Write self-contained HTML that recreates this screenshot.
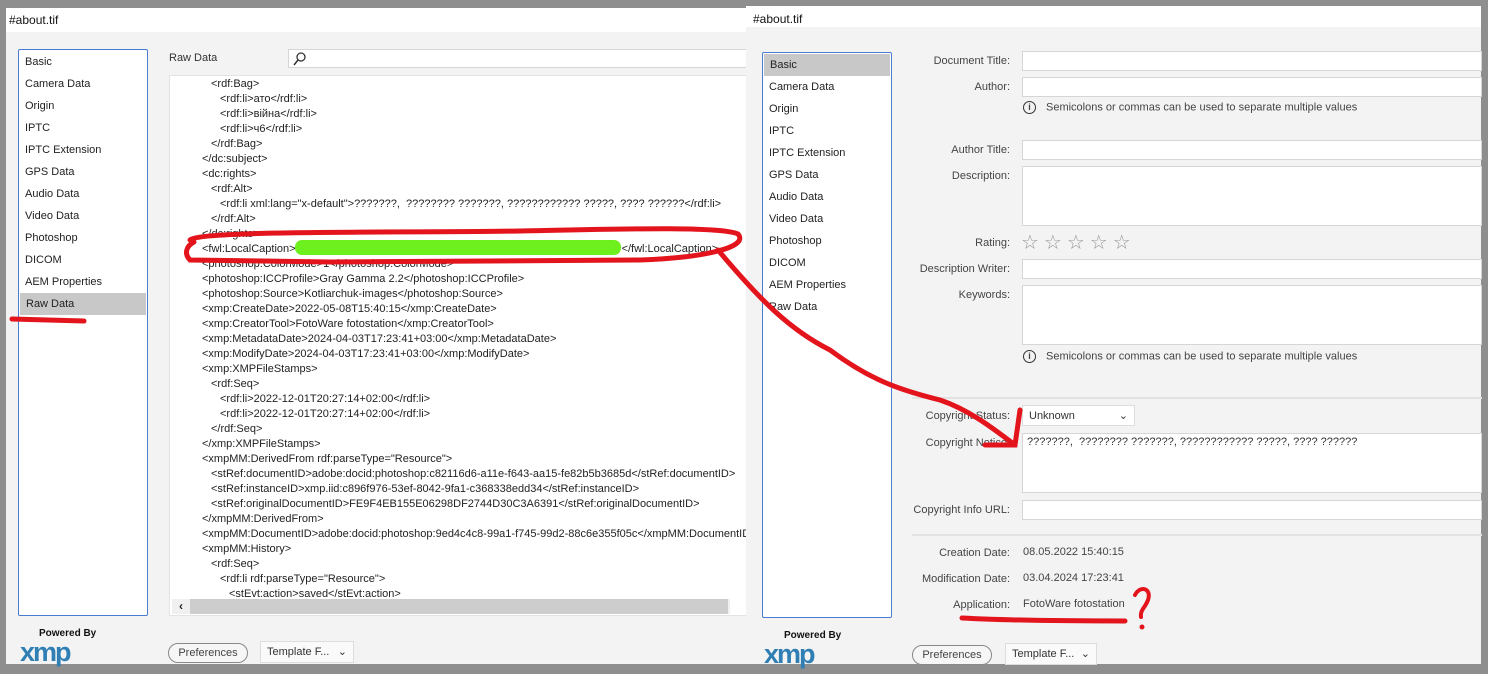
<!DOCTYPE html><html><head><meta charset="utf-8"><style>
*{box-sizing:border-box;margin:0;padding:0}
body{width:1488px;height:674px;background:#8e8e8e;position:relative;overflow:hidden;font-family:"Liberation Sans","DejaVu Sans",sans-serif;font-size:11px;color:#333}
.a{position:absolute}
.win{position:absolute;background:#f3f3f3}
.tb{position:absolute;left:0;right:0;top:0;height:24px;background:#fff;color:#111;font-size:12px;padding:5px 3px}
.side{position:absolute;background:#fff;border:1px solid #4a7bd0;border-radius:2px}
.side div{height:22px;line-height:22px;padding-left:6px;color:#222}
.side .sel{background:#c8c8c8;margin:0 1px}
.ta div{height:15px;line-height:15px;white-space:nowrap;color:#222}
.lbl{position:absolute;right:0;text-align:right;color:#444;width:140px}
.in{position:absolute;background:#fff;border:1px solid #d6d6d6}
.btn{position:absolute;border:1px solid #888;border-radius:10px;height:20px;line-height:18px;text-align:center;color:#444;background:#f6f6f6}
.dd{position:absolute;border:1px solid #ddd;background:#fafafa;height:22px;line-height:20px;padding-left:6px;color:#333}
.xmp{position:absolute;color:#2f7fb5;font-weight:bold;font-size:27px;letter-spacing:-2px;line-height:20px}
.pb{position:absolute;font-size:10px;font-weight:bold;color:#111}
</style></head><body>
<!-- LEFT WINDOW -->
<div class="win" style="left:6px;top:8px;width:740px;height:656px">
<div class="tb">#about.tif</div>
<div class="side" style="left:12px;top:41px;width:130px;height:567px;padding-top:1px">
<div>Basic</div><div>Camera Data</div><div>Origin</div><div>IPTC</div><div>IPTC Extension</div><div>GPS Data</div><div>Audio Data</div><div>Video Data</div><div>Photoshop</div><div>DICOM</div><div>AEM Properties</div><div class="sel">Raw Data</div></div>
<div class="a" style="left:163px;top:44px;color:#333">Raw Data</div>
<div class="in" style="left:282px;top:41px;width:460px;height:19px"><svg class="a" style="left:4px;top:2px" width="14" height="14"><circle cx="8" cy="5" r="4" fill="none" stroke="#333" stroke-width="1.3"/><path d="M5 8 L1 13" stroke="#333" stroke-width="1.5"/></svg></div>
<div class="in ta" style="left:163px;top:67px;width:580px;height:541px;border-color:#e3e3e3;padding-top:1px;overflow:hidden">
<div style="padding-left:41px">&lt;rdf:Bag&gt;</div>
<div style="padding-left:50px">&lt;rdf:li&gt;ато&lt;/rdf:li&gt;</div>
<div style="padding-left:50px">&lt;rdf:li&gt;війна&lt;/rdf:li&gt;</div>
<div style="padding-left:50px">&lt;rdf:li&gt;ч6&lt;/rdf:li&gt;</div>
<div style="padding-left:41px">&lt;/rdf:Bag&gt;</div>
<div style="padding-left:32px">&lt;/dc:subject&gt;</div>
<div style="padding-left:32px">&lt;dc:rights&gt;</div>
<div style="padding-left:41px">&lt;rdf:Alt&gt;</div>
<div style="padding-left:50px">&lt;rdf:li xml:lang="x-default"&gt;???????,&nbsp; ???????? ???????, ???????????? ?????, ???? ??????&lt;/rdf:li&gt;</div>
<div style="padding-left:41px">&lt;/rdf:Alt&gt;</div>
<div style="padding-left:32px">&lt;/dc:rights&gt;</div>
<div style="padding-left:32px">&lt;fwl:LocalCaption&gt;<span style="display:inline-block;width:326px"></span>&lt;/fwl:LocalCaption&gt;</div>
<div style="padding-left:32px">&lt;photoshop:ColorMode&gt;1&lt;/photoshop:ColorMode&gt;</div>
<div style="padding-left:32px">&lt;photoshop:ICCProfile&gt;Gray Gamma 2.2&lt;/photoshop:ICCProfile&gt;</div>
<div style="padding-left:32px">&lt;photoshop:Source&gt;Kotliarchuk-images&lt;/photoshop:Source&gt;</div>
<div style="padding-left:32px">&lt;xmp:CreateDate&gt;2022-05-08T15:40:15&lt;/xmp:CreateDate&gt;</div>
<div style="padding-left:32px">&lt;xmp:CreatorTool&gt;FotoWare fotostation&lt;/xmp:CreatorTool&gt;</div>
<div style="padding-left:32px">&lt;xmp:MetadataDate&gt;2024-04-03T17:23:41+03:00&lt;/xmp:MetadataDate&gt;</div>
<div style="padding-left:32px">&lt;xmp:ModifyDate&gt;2024-04-03T17:23:41+03:00&lt;/xmp:ModifyDate&gt;</div>
<div style="padding-left:32px">&lt;xmp:XMPFileStamps&gt;</div>
<div style="padding-left:41px">&lt;rdf:Seq&gt;</div>
<div style="padding-left:50px">&lt;rdf:li&gt;2022-12-01T20:27:14+02:00&lt;/rdf:li&gt;</div>
<div style="padding-left:50px">&lt;rdf:li&gt;2022-12-01T20:27:14+02:00&lt;/rdf:li&gt;</div>
<div style="padding-left:41px">&lt;/rdf:Seq&gt;</div>
<div style="padding-left:32px">&lt;/xmp:XMPFileStamps&gt;</div>
<div style="padding-left:32px">&lt;xmpMM:DerivedFrom rdf:parseType="Resource"&gt;</div>
<div style="padding-left:41px">&lt;stRef:documentID&gt;adobe:docid:photoshop:c82116d6-a11e-f643-aa15-fe82b5b3685d&lt;/stRef:documentID&gt;</div>
<div style="padding-left:41px">&lt;stRef:instanceID&gt;xmp.iid:c896f976-53ef-8042-9fa1-c368338edd34&lt;/stRef:instanceID&gt;</div>
<div style="padding-left:41px">&lt;stRef:originalDocumentID&gt;FE9F4EB155E06298DF2744D30C3A6391&lt;/stRef:originalDocumentID&gt;</div>
<div style="padding-left:32px">&lt;/xmpMM:DerivedFrom&gt;</div>
<div style="padding-left:32px">&lt;xmpMM:DocumentID&gt;adobe:docid:photoshop:9ed4c4c8-99a1-f745-99d2-88c6e355f05c&lt;/xmpMM:DocumentID&gt;</div>
<div style="padding-left:32px">&lt;xmpMM:History&gt;</div>
<div style="padding-left:41px">&lt;rdf:Seq&gt;</div>
<div style="padding-left:50px">&lt;rdf:li rdf:parseType="Resource"&gt;</div>
<div style="padding-left:59px">&lt;stEvt:action&gt;saved&lt;/stEvt:action&gt;</div>
<div class="a" style="left:2px;top:523px;width:558px;height:15px;background:#f0f0f0"><div class="a" style="left:0;top:0;width:18px;font-size:12px;font-weight:bold;text-align:center">‹</div><div class="a" style="left:18px;top:0;width:538px;height:15px;background:#cdcdcd"></div></div>
</div>
<div class="pb" style="left:33px;top:620px">Powered By</div>
<div class="xmp" style="left:14px;top:634px">xmp</div>
<div class="btn" style="left:162px;top:635px;width:80px">Preferences</div>
<div class="dd" style="left:254px;top:633px;width:94px">Template F... <span style="float:right;margin-right:6px">⌄</span></div>
</div>
<!-- RIGHT WINDOW -->
<div class="win" style="left:746px;top:6px;width:735px;height:658px">
<div class="tb" style="height:21px;padding:6px 7px">#about.tif</div>
<div class="side" style="left:16px;top:46px;width:130px;height:566px;padding-top:1px">
<div class="sel">Basic</div><div>Camera Data</div><div>Origin</div><div>IPTC</div><div>IPTC Extension</div><div>GPS Data</div><div>Audio Data</div><div>Video Data</div><div>Photoshop</div><div>DICOM</div><div>AEM Properties</div><div>Raw Data</div></div>
<div class="a" style="left:124px;top:0;width:140px;height:600px">
<div class="lbl" style="top:49px">Document Title:</div>
<div class="lbl" style="top:75px">Author:</div>
<div class="lbl" style="top:138px">Author Title:</div>
<div class="lbl" style="top:164px">Description:</div>
<div class="lbl" style="top:231px">Rating:</div>
<div class="lbl" style="top:257px">Description Writer:</div>
<div class="lbl" style="top:283px">Keywords:</div>
<div class="lbl" style="top:404px">Copyright Status:</div>
<div class="lbl" style="top:431px">Copyright Notice:</div>
<div class="lbl" style="top:498px">Copyright Info URL:</div>
<div class="lbl" style="top:541px">Creation Date:</div>
<div class="lbl" style="top:567px">Modification Date:</div>
<div class="lbl" style="top:593px">Application:</div>
</div>
<div class="in" style="left:276px;top:45px;width:460px;height:20px"></div>
<div class="in" style="left:276px;top:71px;width:460px;height:20px"></div>
<div class="a" style="left:277px;top:95px;color:#444"><span style="display:inline-block;width:13px;height:13px;border:1.3px solid #333;border-radius:50%;text-align:center;font-size:9px;line-height:11px;font-weight:bold;vertical-align:middle;margin-right:10px">i</span>Semicolons or commas can be used to separate multiple values</div>
<div class="in" style="left:276px;top:134px;width:460px;height:20px"></div>
<div class="in" style="left:276px;top:160px;width:460px;height:60px"></div>
<div class="a" style="left:275px;top:224px;font-size:20px;color:#999;letter-spacing:5px">☆☆☆☆☆</div>
<div class="in" style="left:276px;top:253px;width:460px;height:20px"></div>
<div class="in" style="left:276px;top:279px;width:460px;height:60px"></div>
<div class="a" style="left:277px;top:344px;color:#444"><span style="display:inline-block;width:13px;height:13px;border:1.3px solid #333;border-radius:50%;text-align:center;font-size:9px;line-height:11px;font-weight:bold;vertical-align:middle;margin-right:10px">i</span>Semicolons or commas can be used to separate multiple values</div>
<div class="a" style="left:166px;top:391px;width:570px;height:2px;background:#e2e2e2"></div>
<div class="dd" style="left:276px;top:399px;width:113px;height:21px;background:#fff">Unknown<span style="float:right;margin-right:6px">⌄</span></div>
<div class="in" style="left:276px;top:427px;width:460px;height:60px;padding:2px 4px;color:#333">???????,&nbsp; ???????? ???????, ???????????? ?????, ???? ??????</div>
<div class="in" style="left:276px;top:494px;width:460px;height:20px"></div>
<div class="a" style="left:166px;top:528px;width:570px;height:2px;background:#e2e2e2"></div>
<div class="a" style="left:277px;top:540px;color:#444">08.05.2022 15:40:15</div>
<div class="a" style="left:277px;top:566px;color:#444">03.04.2024 17:23:41</div>
<div class="a" style="left:277px;top:592px;color:#444">FotoWare fotostation</div>
<div class="pb" style="left:38px;top:624px">Powered By</div>
<div class="xmp" style="left:18px;top:638px">xmp</div>
<div class="btn" style="left:166px;top:639px;width:80px">Preferences</div>
<div class="dd" style="left:259px;top:637px;width:92px">Template F... <span style="float:right;margin-right:6px">⌄</span></div>
</div>
<!-- annotations -->
<svg class="a" style="left:0;top:0" width="1488" height="674">
<rect x="295" y="240" width="326" height="15" rx="7" fill="#6ef01e"/>
<path d="M190 240 C200 230 400 233 520 231 C620 229 720 226 738 234 C750 248 700 258 640 260 L330 262 L190 260 C184 254 186 246 194 242" fill="none" stroke="#e3141c" stroke-width="5" stroke-linecap="round"/>
<path d="M12 319 L84 321" stroke="#e3141c" stroke-width="5" stroke-linecap="round"/>
<path d="M718 250 C760 300 790 330 830 350 C870 380 900 390 940 400 C970 410 995 430 1015 445" fill="none" stroke="#e3141c" stroke-width="5" stroke-linecap="round"/>
<path d="M1020 410 L1015 445 L985 445" fill="none" stroke="#e3141c" stroke-width="5" stroke-linecap="round"/>
<path d="M962 618 C1000 620 1070 621 1125 621" stroke="#e3141c" stroke-width="5" stroke-linecap="round" fill="none"/>
<path d="M1135 595 C1140 585 1152 588 1148 600 C1145 608 1140 610 1141 617" stroke="#e3141c" stroke-width="4" stroke-linecap="round" fill="none"/>
<circle cx="1142" cy="627" r="2.5" fill="#e3141c"/>
</svg>
</body></html>
